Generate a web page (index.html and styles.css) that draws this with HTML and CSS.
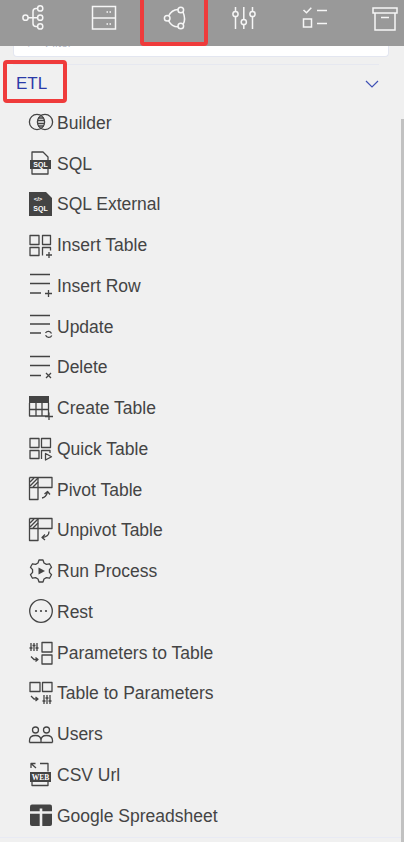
FILE: index.html
```html
<!DOCTYPE html>
<html lang="en">
<head>
    <meta charset="UTF-8">
    <meta name="viewport" content="width=device-width, initial-scale=1.0">
    <title>ETL</title>
    <link rel="stylesheet" href="styles.css">
</head>
<body>
    <div class="toolbar">
        <div class="tool">
            <svg viewBox="0 0 28 28"><circle cx="6.5" cy="13.7" r="2.6"/><circle cx="21.2" cy="4.4" r="2.6"/><circle cx="21.2" cy="13.7" r="2.6"/><circle cx="21.2" cy="22.4" r="2.6"/><path d="M9 13.7h9.6M18.6 4.4h-1.6q-3 0-3 3v12q0 3 3 3h1.6"/></svg>
        </div>
        <div class="tool">
            <svg viewBox="0 0 28 28"><rect x="2.5" y="2.5" width="23" height="22.5"/><path d="M2.5 14h23M16.500 8h1.500M19.500 8h1.500M16.500 20h1.500M19.500 20h1.500"/></svg>
        </div>
        <div class="tool tool-active">
            <svg viewBox="0 0 28 28"><circle cx="20.8" cy="6" r="2.8"/><circle cx="7.2" cy="14.3" r="2.8"/><circle cx="20.8" cy="22" r="2.8"/><path d="M18 5.600Q11.500 6 8.800 11.800M23 8Q26 15 23.300 20M18 22.800Q12 23 8.600 16.800"/></svg>
        </div>
        <div class="tool">
            <svg viewBox="0 0 28 28"><circle cx="5.5" cy="10" r="2.6"/><circle cx="13.8" cy="18" r="2.6"/><circle cx="22.5" cy="10" r="2.6"/><path d="M5.500 3v4.400M5.500 12.600V25M13.800 3v12.400M13.800 20.600V25M22.500 3v4.400M22.500 12.600V25"/></svg>
        </div>
        <div class="tool">
            <svg viewBox="0 0 28 28"><path d="M2.500 6l3 2.800 4.800-5M16 6.500h10M16 19.500h10"/><rect x="2.500" y="15" width="8" height="8"/></svg>
        </div>
        <div class="tool">
            <svg viewBox="0 0 28 28"><rect x="2" y="4" width="24" height="5"/><path d="M4 9v17h20V9M10 13.500h8"/></svg>
        </div>
    </div>

    <div class="filter-box"><span class="filter-text">&#8981; &nbsp; Filter</span></div>

    <div class="section-head">
        <span class="section-title">ETL</span>
        <svg class="chevron" viewBox="0 0 14 8"><path d="M1 1l6 6 6-6"/></svg>
    </div>

    <ul class="etl-list">
        <li>
            <svg viewBox="0 0 24 24"><circle cx="8" cy="12" r="7.600"/><circle cx="16" cy="12" r="7.600"/><path d="M9 8h6M8.400 10.500h7.200M8.400 13.500h7.200M9 16h6"/></svg>
            <span>Builder</span>
        </li>
        <li>
            <svg viewBox="0 0 24 24"><path d="M3 9V1h11l5 5v3M3 18v5h16v-5"/><path class="solid" d="M1 9h21v9H1z"/><text class="tag" x="11.500" y="16">SQL</text></svg>
            <span>SQL</span>
        </li>
        <li>
            <svg viewBox="0 0 24 24"><path class="solid" d="M0 0h17l6 6v18H0z"/><text class="tag tag-sm" x="9" y="9">&lt;/&gt;</text><text class="tag" x="11.500" y="19">SQL</text></svg>
            <span>SQL External</span>
        </li>
        <li>
            <svg viewBox="0 0 24 24"><rect x="1" y="2.500" width="9" height="9"/><rect x="13.500" y="2.500" width="8" height="9"/><rect x="1" y="14.500" width="9" height="8"/><path d="M13.500 22.500v-8h8v3M17 22h6M20 19v6"/></svg>
            <span>Insert Table</span>
        </li>
        <li>
            <svg viewBox="0 0 24 24"><path d="M1 1.500h20M1 10.500h20M1 20h11M16 20.500h7M19.500 17v7"/></svg>
            <span>Insert Row</span>
        </li>
        <li>
            <svg viewBox="0 0 24 24"><path d="M1 1.500h20M1 10h20M1 19h11M16.500 19a3.400 3.400 0 0 1 6 .5M22.800 21.500a3.400 3.400 0 0 1-6.200-.2"/></svg>
            <span>Update</span>
        </li>
        <li>
            <svg viewBox="0 0 24 24"><path d="M1 1.500h20M1 10.500h20M1 20.500h11M17 18l5 5M22 18l-5 5"/></svg>
            <span>Delete</span>
        </li>
        <li>
            <svg viewBox="0 0 24 24"><path class="solid" d="M0 0h20v7H0z"/><path d="M.5 7v13h19V7M7 7v13M13 7v13M.5 13.500h19M16 20.500h8M20 16.500v7.500"/></svg>
            <span>Create Table</span>
        </li>
        <li>
            <svg viewBox="0 0 24 24"><rect x="1" y="2.500" width="9" height="9"/><rect x="12.500" y="2.500" width="9" height="9"/><rect x="1" y="14.500" width="9" height="8"/><path d="M12.500 23v-8.500h8.500v2.500M16.500 17.500v6.500l6-3.200z"/></svg>
            <span>Quick Table</span>
        </li>
        <li>
            <svg viewBox="0 0 24 24"><path d="M.5.5h22.500v10H.5M.5.5V22.500H9V.5"/><path class="hatch" d="M1 5l4-4M1 9l8-8M4 10l5-5"/><path d="M13 21q4-.5 5.500-6M15.500 17l3-2.500 2.500 3"/></svg>
            <span>Pivot Table</span>
        </li>
        <li>
            <svg viewBox="0 0 24 24"><path d="M.5.5h22.500v10H.5M.5.5V22.500H9V.5"/><path class="hatch" d="M1 5l4-4M1 9l8-8M4 10l5-5"/><path d="M20 13.500q0 5-6.500 6M16 16.500l-3 3 3 2.500"/></svg>
            <span>Unpivot Table</span>
        </li>
        <li>
            <svg viewBox="0 0 24 24"><path d="M9 4L10 1H14L15 4L17.430 5.400L20.530 4.770L22.530 8.230L20.430 10.600V13.400L22.530 15.770L20.530 19.230L17.430 18.600L15 20L14 23H10L9 20L6.570 18.600L3.470 19.230L1.470 15.770L3.570 13.400V10.600L1.470 8.230L3.470 4.770L6.570 5.400Z"/><path class="solid" d="M9.500 8.500l6.500 3.500-6.500 3.500z"/></svg>
            <span>Run Process</span>
        </li>
        <li>
            <svg viewBox="0 0 24 24"><circle cx="12" cy="12" r="11.300"/><circle class="solid" cx="7" cy="12" r="1.100"/><circle class="solid" cx="12" cy="12" r="1.100"/><circle class="solid" cx="17" cy="12" r="1.100"/></svg>
            <span>Rest</span>
        </li>
        <li>
            <svg viewBox="0 0 24 24"><path d="M2 3v8M5 3v8M8 3v8M.5 8h3M3.500 5.500h3M6.500 8h3M2 16.500l3 3h4M6.500 17.500l2.500 2-2.500 2"/><rect x="13" y="2.500" width="10" height="9.500"/><rect x="13" y="15" width="10" height="9"/></svg>
            <span>Parameters to Table</span>
        </li>
        <li>
            <svg viewBox="0 0 24 24"><rect x="1" y="1.500" width="10" height="9"/><rect x="13.500" y="1.500" width="9.500" height="9"/><path d="M2 15l3 3h4M6.500 16l2.500 2-2.500 2M15 14v9M18 14v9M21 14v9M13.500 20h3M16.500 17h3M19.500 20h3"/></svg>
            <span>Table to Parameters</span>
        </li>
        <li>
            <svg viewBox="0 0 24 24"><circle cx="6.500" cy="8" r="3"/><circle cx="17.500" cy="8" r="3"/><path d="M.5 20.500v-2q0-5 6-5 5.500 0 5.500 5v2M12 18.500q0-5 5.500-5 6 0 6 5v2M.5 20.500h23"/></svg>
            <span>Users</span>
        </li>
        <li>
            <svg viewBox="0 0 24 24"><path d="M7 6L2 1.500M2 6V1.500h4.500M11 1.500h8v8M3 20v3.500h16V20"/><path class="solid" d="M1 10h21v10H1z"/><text class="tag tag-web" x="11.500" y="18">WEB</text></svg>
            <span>CSV Url</span>
        </li>
        <li>
            <svg viewBox="0 0 24 24"><rect class="solid" x="1" y="1.500" width="22" height="21.500" rx="2"/><path class="cross" d="M1 9.500h22M12 5.500V23"/></svg>
            <span>Google Spreadsheet</span>
        </li>
    </ul>

    <div class="list-end"></div>

    <div class="mark mark-tool"></div>
    <div class="mark mark-etl"></div>
    <div class="scroll-thumb"></div>
</body>
</html>
```

FILE: styles.css
```css
body {
    font-family: "Liberation Sans", Arial, sans-serif;
    margin: 0;
    padding: 0;
    height: 842px;
    overflow: hidden;
    background-color: #f0f0f0;
    color: #444;
}

.toolbar {
    display: grid;
    grid-template-columns: repeat(6, 70.4px);
    height: 46px;
    margin-left: -2px;
    background-color: #999;
}

.tool {
    display: flex;
    justify-content: center;
    padding-top: 4px;
}

.tool svg {
    width: 28px;
    height: 28px;
    fill: none;
    stroke: #f6f6f6;
    stroke-width: 1.5;
}

.filter-box {
    display: flex;
    align-items: flex-end;
    box-sizing: border-box;
    height: 11px;
    margin: 0 15px 0 13px;
    padding-left: 14px;
    overflow: hidden;
    background-color: #fff;
    border: 1px solid #e3e6f0;
    border-top: none;
    border-radius: 0 0 4px 4px;
}

.filter-text {
    font-size: 12px;
    line-height: 12px;
    margin-bottom: 7px;
    color: #b8bccc;
}

.section-head {
    display: flex;
    justify-content: space-between;
    align-items: center;
    box-sizing: border-box;
    height: 38px;
    margin: 7px 25px 0 13px;
    padding: 0 0 0 3px;
    border-top: 1px solid #e6e8f0;
}

.section-title {
    font-size: 17px;
    color: #2b3aa8;
}

.chevron {
    width: 14px;
    height: 8px;
    fill: none;
    stroke: #3f51b5;
    stroke-width: 1.2;
}

.etl-list {
    list-style: none;
    margin: 0;
    padding: 0 0 0 29px;
}

.etl-list li {
    display: flex;
    align-items: center;
    gap: 4px;
    height: 40.76px;
    font-size: 17.5px;
}

.etl-list span {
    padding-top: 2px;
}

.etl-list svg {
    flex: none;
    width: 24px;
    height: 24px;
    overflow: visible;
    fill: none;
    stroke: #444;
    stroke-width: 1.3;
    stroke-linejoin: round;
}

.etl-list svg .solid {
    fill: #444;
    stroke: none;
}

.etl-list svg .hatch {
    stroke-width: 1.4;
}

.etl-list svg .cross {
    stroke: #f0f0f0;
    stroke-width: 2.6;
}

.etl-list svg .tag {
    font-family: "Liberation Sans", Arial, sans-serif;
    font-size: 7px;
    font-weight: bold;
    text-anchor: middle;
    fill: #fff;
    stroke: none;
}

.etl-list svg .tag-sm {
    font-size: 6px;
}

.etl-list svg .tag-web {
    font-family: "Liberation Serif", serif;
    font-size: 7.5px;
}

.list-end {
    margin-top: 1px;
    border-top: 1px solid #e8eaf4;
}

.mark {
    position: absolute;
    box-sizing: border-box;
    border: 4px solid #ef3b3b;
    border-radius: 4px;
}

.mark-tool {
    left: 140px;
    top: -4px;
    width: 68px;
    height: 50px;
}

.mark-etl {
    left: 3px;
    top: 60px;
    width: 64px;
    height: 43px;
}

.scroll-thumb {
    position: absolute;
    right: 0;
    top: 119px;
    bottom: 0;
    width: 3px;
    background-color: #c1c1c1;
}
```
